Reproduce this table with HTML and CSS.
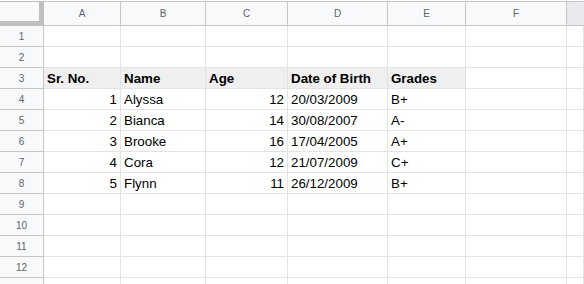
FILE: index.html
```html
<!DOCTYPE html>
<html>
<head>
<meta charset="utf-8">
<link rel="stylesheet" href="styles.css">
</head>
<body>
<div class="sheet">
  <div class="corner"></div>
  <div class="colhead">A</div>
  <div class="colhead">B</div>
  <div class="colhead">C</div>
  <div class="colhead">D</div>
  <div class="colhead">E</div>
  <div class="colhead">F</div>
  <div class="colhead extra"></div>

  <div class="rowhead">1</div>
  <div class="c"></div><div class="c"></div><div class="c"></div><div class="c"></div><div class="c"></div><div class="c"></div><div class="c"></div>

  <div class="rowhead">2</div>
  <div class="c"></div><div class="c"></div><div class="c"></div><div class="c"></div><div class="c"></div><div class="c"></div><div class="c"></div>

  <div class="rowhead">3</div>
  <div class="c th">Sr. No.</div><div class="c th">Name</div><div class="c th">Age</div><div class="c th">Date of Birth</div><div class="c th">Grades</div><div class="c"></div><div class="c"></div>

  <div class="rowhead">4</div>
  <div class="c num">1</div><div class="c">Alyssa</div><div class="c num">12</div><div class="c">20/03/2009</div><div class="c">B+</div><div class="c"></div><div class="c"></div>

  <div class="rowhead">5</div>
  <div class="c num">2</div><div class="c">Bianca</div><div class="c num">14</div><div class="c">30/08/2007</div><div class="c">A-</div><div class="c"></div><div class="c"></div>

  <div class="rowhead">6</div>
  <div class="c num">3</div><div class="c">Brooke</div><div class="c num">16</div><div class="c">17/04/2005</div><div class="c">A+</div><div class="c"></div><div class="c"></div>

  <div class="rowhead">7</div>
  <div class="c num">4</div><div class="c">Cora</div><div class="c num">12</div><div class="c">21/07/2009</div><div class="c">C+</div><div class="c"></div><div class="c"></div>

  <div class="rowhead">8</div>
  <div class="c num">5</div><div class="c">Flynn</div><div class="c num">11</div><div class="c">26/12/2009</div><div class="c">B+</div><div class="c"></div><div class="c"></div>

  <div class="rowhead">9</div>
  <div class="c"></div><div class="c"></div><div class="c"></div><div class="c"></div><div class="c"></div><div class="c"></div><div class="c"></div>

  <div class="rowhead">10</div>
  <div class="c"></div><div class="c"></div><div class="c"></div><div class="c"></div><div class="c"></div><div class="c"></div><div class="c"></div>

  <div class="rowhead">11</div>
  <div class="c"></div><div class="c"></div><div class="c"></div><div class="c"></div><div class="c"></div><div class="c"></div><div class="c"></div>

  <div class="rowhead">12</div>
  <div class="c"></div><div class="c"></div><div class="c"></div><div class="c"></div><div class="c"></div><div class="c"></div><div class="c"></div>

  <div class="rowhead">13</div>
  <div class="c"></div><div class="c"></div><div class="c"></div><div class="c"></div><div class="c"></div><div class="c"></div><div class="c"></div>
</div>
</body>
</html>
```

FILE: styles.css
```css
html, body {
  margin: 0;
  padding: 0;
  background: #ffffff;
  overflow: hidden;
}

.sheet {
  margin-top: 1px;
  display: grid;
  grid-template-columns: 44px 77px 85px 82px 100px 78px 101px 1fr;
  grid-template-rows: 25px;
  grid-auto-rows: 21px;
  font-family: "Liberation Sans", Arial, sans-serif;
}

.corner {
  background: #f8f9fa;
  border-top: 1px solid #c0c0c0;
  border-right: 5px solid #bfbfbf;
  border-bottom: 5px solid #bfbfbf;
  box-sizing: border-box;
}

.colhead {
  box-sizing: border-box;
  background: #f8f9fa;
  border-top: 1px solid #c4c7c5;
  border-right: 1px solid #c4c7c5;
  border-bottom: 1px solid #c4c7c5;
  color: #5f6368;
  font-size: 10px;
  display: flex;
  align-items: center;
  justify-content: center;
}

.colhead.extra {
  background: #e8eaed;
  border-right: none;
}

.rowhead {
  box-sizing: border-box;
  background: #f8f9fa;
  border-right: 1px solid #c4c7c5;
  border-bottom: 1px solid #c4c7c5;
  color: #5f6368;
  font-size: 10px;
  display: flex;
  align-items: center;
  justify-content: center;
}

.c {
  box-sizing: border-box;
  border-right: 1px solid #e2e3e3;
  border-bottom: 1px solid #e2e3e3;
  font-size: 13.33px;
  line-height: 16px;
  color: #000000;
  padding: 0 3px 1px;
  display: flex;
  align-items: flex-end;
  white-space: nowrap;
  overflow: hidden;
}

.c.num {
  justify-content: flex-end;
}

.c.th {
  background: #efefef;
  font-weight: bold;
}
```
